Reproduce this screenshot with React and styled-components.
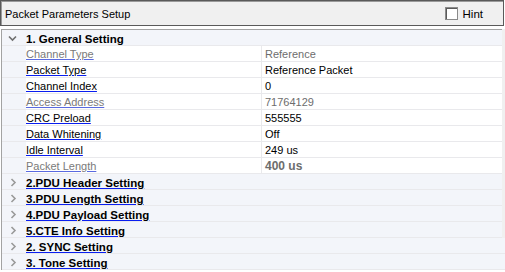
import React from 'react';
import styled, {createGlobalStyle} from 'styled-components';

const gridBg = '#f3f5fa';
const lineColor = '#e9e9ec';
const linkBlue = '#0a1ef0';

const GlobalStyle = createGlobalStyle`
  html, body {
    margin: 0;
    padding: 0;
    background: #ffffff;
  }
  body {
    font-family: "Liberation Sans", Arial, sans-serif;
    font-size: 11px;
    color: #000000;
  }
`;

const generalRows = [
    {name: 'Channel Type', value: 'Reference', readOnly: true},
    {name: 'Packet Type', value: 'Reference Packet'},
    {name: 'Channel Index', value: '0'},
    {name: 'Access Address', value: '71764129', readOnly: true},
    {name: 'CRC Preload', value: '555555'},
    {name: 'Data Whitening', value: 'Off'},
    {name: 'Idle Interval', value: '249 us'},
    {name: 'Packet Length', value: '400 us', readOnly: true, bold: true},
];

const collapsed = [
    {title: '2.PDU Header Setting'},
    {title: '3.PDU Length Setting'},
    {title: '4.PDU Payload Setting'},
    {title: '5.CTE Info Setting'},
    {title: '2. SYNC Setting', wide: true},
    {title: '3. Tone Setting', wide: true},
];

const Chevron = ({open}) => (
    <svg width="9" height="9" viewBox="0 0 9 9">
        {open
            ? <polyline points="1,2.5 4.5,6 8,2.5" fill="none" stroke="#6f6f6f" strokeWidth="1.6"/>
            : <polyline points="2.5,1 6,4.5 2.5,8" fill="none" stroke="#9a9a9a" strokeWidth="1.6"/>}
    </svg>
);

export default function App() {
    return (
        <Page>
            <GlobalStyle/>
            <HeaderBar>
                <Title>Packet Parameters Setup</Title>
                <HintLabel>
                    <CheckBox/>
                    Hint
                </HintLabel>
            </HeaderBar>
            <GridArea>
                <Grid>
                    <CategoryRow>
                        <Gutter open={1}><Chevron open/></Gutter>
                        <CategoryTitle>1. General Setting</CategoryTitle>
                    </CategoryRow>
                    {generalRows.map(row => (
                        <PropertyRow key={row.name}>
                            <Gutter/>
                            <NameCell>
                                <NameText readOnly={row.readOnly ? 1 : 0}>{row.name}</NameText>
                            </NameCell>
                            <ValueCell readOnly={row.readOnly ? 1 : 0} bold={row.bold ? 1 : 0}>
                                {row.value}
                            </ValueCell>
                        </PropertyRow>
                    ))}
                    {collapsed.filter(c => !c.wide).map(c => (
                        <CategoryRow key={c.title}>
                            <Gutter><Chevron/></Gutter>
                            <CategoryTitle underline={1}>{c.title}</CategoryTitle>
                        </CategoryRow>
                    ))}
                </Grid>
                <ScrollGutter/>
            </GridArea>
            <WideRows>
                {collapsed.filter(c => c.wide).map(c => (
                    <CategoryRow key={c.title}>
                        <Gutter><Chevron/></Gutter>
                        <CategoryTitle underline={1}>{c.title}</CategoryTitle>
                    </CategoryRow>
                ))}
            </WideRows>
        </Page>
    );
}

const Page = styled.div`
  width: 505px;
  height: 272px;
  overflow: hidden;
  background: #ffffff;
`;

const HeaderBar = styled.div`
  box-sizing: border-box;
  width: 504px;
  height: 26px;
  display: flex;
  align-items: center;
  justify-content: space-between;
  padding: 1px 20px 0 4px;
  background: #f0f0f0;
  border: 1px solid #5a5a5a;
  box-shadow: inset 1px 1px 0 #9a9a9a;
`;

const Title = styled.span`
  font-size: 11px;
  color: #000000;
`;

const HintLabel = styled.label`
  display: flex;
  align-items: center;
  gap: 5px;
  font-size: 11.5px;
  color: #000000;
`;

const CheckBox = styled.span`
  box-sizing: border-box;
  display: inline-block;
  width: 13px;
  height: 13px;
  background: #ffffff;
  border: 1px solid #8a8a8a;
  box-shadow: inset 1px 1px 0 #5a5a5a;
`;

const GridArea = styled.div`
  display: flex;
  margin-top: 3px;
`;

const Grid = styled.div`
  width: 500px;
  margin-left: 1px;
  border-top: 1px solid #a3a3a3;
  border-left: 1px solid #a3a3a3;
`;

const ScrollGutter = styled.div`
  flex: 1;
  background: #f0f0f0;
`;

const WideRows = styled.div`
  margin-left: 1px;
  border-left: 1px solid #a3a3a3;
`;

const Row = styled.div`
  box-sizing: border-box;
  display: flex;
  height: 16px;
  border-bottom: 1px solid ${lineColor};
`;

const CategoryRow = styled(Row)`
  background: ${gridBg};
`;

const PropertyRow = styled(Row)`
  background: #ffffff;
`;

const Gutter = styled.div`
  box-sizing: border-box;
  width: 24px;
  flex: none;
  display: flex;
  align-items: center;
  padding-left: ${props => props.open === 1 ? '6px' : '7px'};
  padding-top: 1px;
  background: ${gridBg};
`;

const CategoryTitle = styled.span`
  font-weight: bold;
  font-size: 11.5px;
  line-height: 16px;
  padding-top: 1px;
  color: #000000;
  text-decoration: ${props => props.underline === 1 ? 'underline' : 'none'};
  text-decoration-color: ${linkBlue};
  text-underline-offset: 1px;
`;

const NameCell = styled.div`
  box-sizing: border-box;
  width: 236px;
  flex: none;
  padding: 1px 0 0 0;
  border-right: 1px solid ${lineColor};
  line-height: 15px;
`;

const NameText = styled.span`
  color: ${props => props.readOnly === 1 ? '#7a7a7a' : '#000000'};
  text-decoration: underline;
  text-decoration-color: ${props => props.readOnly === 1 ? '#5a6ae0' : linkBlue};
  text-underline-offset: 1px;
`;

const ValueCell = styled.div`
  padding: 1px 0 0 3px;
  line-height: 15px;
  color: ${props => props.readOnly === 1 ? '#6d6d6d' : '#000000'};
  font-weight: ${props => props.bold === 1 ? 'bold' : 'normal'};
  font-size: ${props => props.bold === 1 ? '12px' : '11px'};
`;
